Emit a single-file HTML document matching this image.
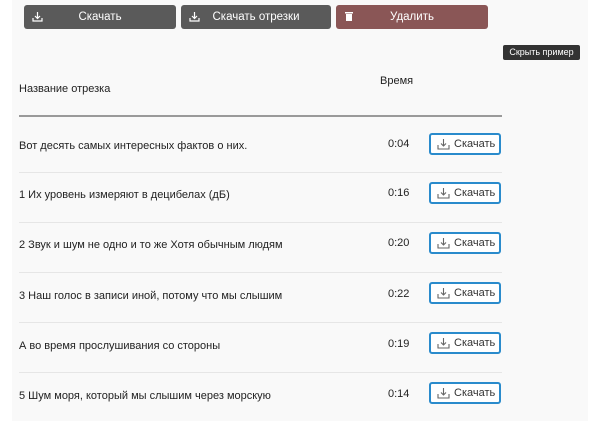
<!DOCTYPE html>
<html><head><meta charset="utf-8"><style>
*{margin:0;padding:0;box-sizing:border-box}
body{width:600px;height:424px;background:#fff;font-family:"Liberation Sans","DejaVu Sans",sans-serif;color:#222;position:relative;overflow:hidden;font-size:11px}
.panel{position:absolute;left:12px;top:0;width:576px;height:421px;background:#f9f9f9}
.tb{position:absolute;top:5px;height:24px;border-radius:3px;color:#fff;font-size:11.5px;line-height:24px;text-align:center;background:#5a5a5a}
.tb svg{position:absolute;left:8px;top:6px}
.a{position:absolute}
.sep{position:absolute;left:19px;width:483px;height:1px;background:#e6e6e6}
.dl{position:absolute;left:429px;width:72px;height:22px;border:2px solid #2a8bcc;border-radius:3px;background:#fff;font-size:11px;line-height:18px;padding-left:23px;color:#333}
.dl svg{position:absolute;left:6px;top:3px}
.tip{position:absolute;left:503px;top:45px;width:77px;height:15px;background:#333;color:#fff;font-size:9px;line-height:15px;text-align:center;border-radius:2px}
</style></head><body>
<div class="panel"></div>
<div class="tb" style="left:24px;width:152px"><svg width="11" height="11" viewBox="0 0 11 11" fill="none" stroke="#fff" stroke-width="1.2"><path d="M5.5 1v6M3 5l2.5 2.5L8 5M1 7v3h9V7"/></svg>Скачать</div>
<div class="tb" style="left:181px;width:150px"><svg width="11" height="11" viewBox="0 0 11 11" fill="none" stroke="#fff" stroke-width="1.2"><path d="M5.5 1v6M3 5l2.5 2.5L8 5M1 7v3h9V7"/></svg>Скачать отрезки</div>
<div class="tb" style="left:336px;width:152px;background:#8a5656"><svg width="10" height="11" viewBox="0 0 10 11" fill="#fff"><rect x="1" y="1" width="8" height="1.5"/><rect x="2" y="3" width="6" height="7"/></svg>Удалить</div>
<div class="tip">Скрыть пример</div>
<div class="a" style="left:19px;top:83px">Название отрезка</div>
<div class="a" style="left:380px;top:75px">Время</div>
<div class="a" style="left:19px;top:115px;width:483px;height:2px;background:#9a9a9a"></div>

<div class="a" style="left:19px;top:140px">Вот десять самых интересных фактов о них.</div>
<div class="a" style="left:388px;top:138px">0:04</div>
<div class="dl" style="top:133px"><svg width="13" height="12" viewBox="0 0 13 12" fill="none" stroke="#666" stroke-width="1.1"><path d="M6.5 1v7M4 5.5l2.5 2.5L9 5.5M1 7v4h11V7"/></svg>Скачать</div>
<div class="sep" style="top:172px"></div>

<div class="a" style="left:19px;top:189px">1 Их уровень измеряют в децибелах (дБ)</div>
<div class="a" style="left:388px;top:187px">0:16</div>
<div class="dl" style="top:182px"><svg width="13" height="12" viewBox="0 0 13 12" fill="none" stroke="#666" stroke-width="1.1"><path d="M6.5 1v7M4 5.5l2.5 2.5L9 5.5M1 7v4h11V7"/></svg>Скачать</div>
<div class="sep" style="top:222px"></div>

<div class="a" style="left:19px;top:239px">2 Звук и шум не одно и то же Хотя обычным людям</div>
<div class="a" style="left:388px;top:237px">0:20</div>
<div class="dl" style="top:232px"><svg width="13" height="12" viewBox="0 0 13 12" fill="none" stroke="#666" stroke-width="1.1"><path d="M6.5 1v7M4 5.5l2.5 2.5L9 5.5M1 7v4h11V7"/></svg>Скачать</div>
<div class="sep" style="top:272px"></div>

<div class="a" style="left:19px;top:290px">3 Наш голос в записи иной, потому что мы слышим</div>
<div class="a" style="left:388px;top:288px">0:22</div>
<div class="dl" style="top:282px"><svg width="13" height="12" viewBox="0 0 13 12" fill="none" stroke="#666" stroke-width="1.1"><path d="M6.5 1v7M4 5.5l2.5 2.5L9 5.5M1 7v4h11V7"/></svg>Скачать</div>
<div class="sep" style="top:322px"></div>

<div class="a" style="left:19px;top:340px">А во время прослушивания со стороны</div>
<div class="a" style="left:388px;top:338px">0:19</div>
<div class="dl" style="top:332px"><svg width="13" height="12" viewBox="0 0 13 12" fill="none" stroke="#666" stroke-width="1.1"><path d="M6.5 1v7M4 5.5l2.5 2.5L9 5.5M1 7v4h11V7"/></svg>Скачать</div>
<div class="sep" style="top:372px"></div>

<div class="a" style="left:19px;top:390px">5 Шум моря, который мы слышим через морскую</div>
<div class="a" style="left:388px;top:388px">0:14</div>
<div class="dl" style="top:382px"><svg width="13" height="12" viewBox="0 0 13 12" fill="none" stroke="#666" stroke-width="1.1"><path d="M6.5 1v7M4 5.5l2.5 2.5L9 5.5M1 7v4h11V7"/></svg>Скачать</div>
</body></html>
